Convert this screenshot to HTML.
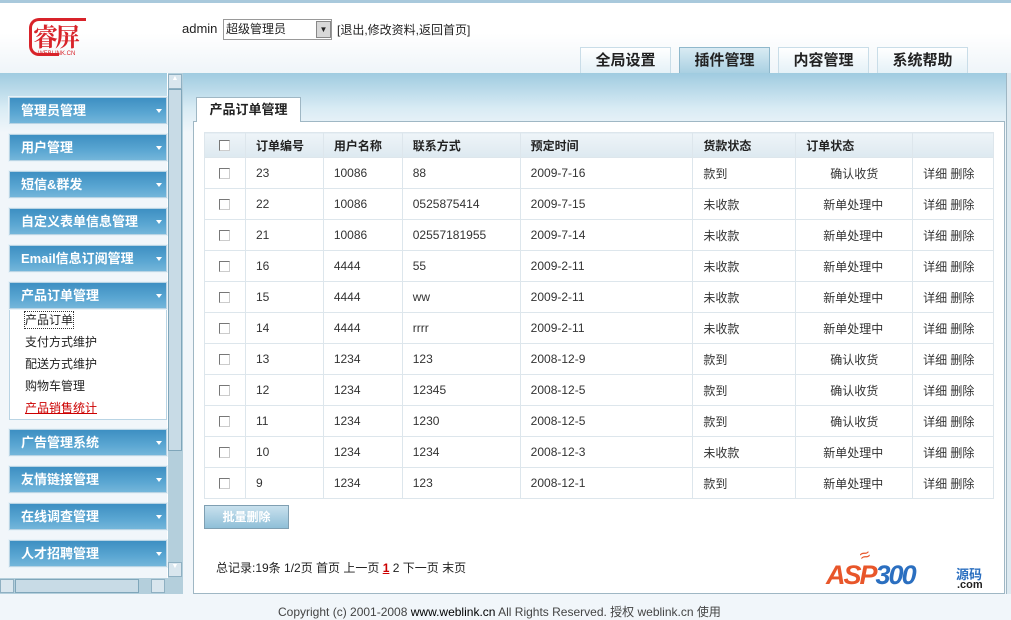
<!DOCTYPE html>
<html><head><meta charset="utf-8">
<style>
*{margin:0;padding:0;box-sizing:border-box}
body{width:1011px;height:612px;overflow:hidden;background:#f1f6fa;font-family:"Liberation Sans","Noto Sans CJK SC","WenQuanYi Zen Hei",sans-serif;font-size:12px;color:#222;position:relative}
.a{position:absolute}
.top{left:0;top:0;width:1011px;height:73px;background:linear-gradient(#fff 0,#fff 30px,#eef4f8 73px);border-top:3px solid #a9c9dc}
.band{left:0;top:73px;width:1011px;height:60px;background:linear-gradient(#9fcbe0,#d8ebf4 35px,#f1f6fa 60px)}
.tab{top:47px;height:26px;width:91px;background:linear-gradient(#fff,#e4f1f7);border:1px solid #c9dde8;border-bottom:none;font-size:15px;font-weight:bold;text-align:center;line-height:25px;color:#222}
.tab.on{background:linear-gradient(#d9ebf3,#a9d0e2);border-color:#8fb8cc}
.mi{left:9px;width:158px;height:27px;background:linear-gradient(#3d8fc2,#5aa6d2 60%,#74b6da);border:1px solid #b9d4e4;outline:1px solid #e8f2f8;color:#fff;font-weight:bold;font-size:13px;line-height:25px;padding-left:11px}
.mi:after{content:"";position:absolute;right:4px;top:11px;border:3px solid transparent;border-top:4px solid #fff}
.sub{left:18px;font-size:12px;line-height:22px}
table{border-collapse:collapse;position:absolute;left:204px;top:132px;width:790px}
td{border:1px solid #dde6ec;height:31px;padding-left:10px;font-size:12px;color:#333}
tr.h td{height:25px;background:linear-gradient(#eef4f8,#dde9f0);font-weight:bold;color:#222}
.cb{display:inline-block;width:11px;height:11px;border:1px solid #777;border-right-color:#ccc;border-bottom-color:#ccc;background:#fff;vertical-align:middle}
</style></head><body>
<div class="a top"></div>
<div class="a band"></div>
<!-- logo -->
<div class="a" style="left:29px;top:18px;width:30px;height:38px;border:3px solid #d8232a;border-right:none;border-radius:10px 0 0 10px"></div>
<div class="a" style="left:50px;top:18px;width:36px;height:3px;background:#d8232a"></div>
<div class="a" style="left:33px;top:18px;font-size:25px;font-weight:bold;color:#d8232a;letter-spacing:-3px;font-family:'Noto Serif CJK SC',serif">睿屏</div>
<div class="a" style="left:38px;top:51px;font-size:6px;color:#d8232a">WEBLINK.CN</div>
<div class="a" style="left:182px;top:21px;font-size:13px">admin</div>
<div class="a" style="left:223px;top:19px;width:109px;height:21px;border:1px solid #999;background:#fff;font-size:12px;line-height:18px;padding-left:2px">超级管理员</div>
<div class="a" style="left:316px;top:21px;width:15px;height:17px;background:#d8d8d8;border:1px solid #888;font-size:8px;text-align:center;line-height:16px">▼</div>
<div class="a" style="left:337px;top:21px;font-size:12px">[退出,修改资料,返回首页]</div>
<div class="a tab" style="left:580px">全局设置</div>
<div class="a tab on" style="left:679px">插件管理</div>
<div class="a tab" style="left:778px">内容管理</div>
<div class="a tab" style="left:877px">系统帮助</div>
<!-- sidebar -->
<div class="a" style="left:167px;top:73px;width:16px;height:505px;background:#b4cfdc;border-left:1px solid #fff"></div>
<div class="a" style="left:168px;top:74px;width:14px;height:15px;background:#d9e6ee;border:1px solid #8fb0c2;font-size:7px;text-align:center;color:#fff">▲</div>
<div class="a" style="left:168px;top:89px;width:14px;height:362px;background:#c8dbe6;border:1px solid #7fa6ba"></div>
<div class="a" style="left:168px;top:562px;width:14px;height:15px;background:#d9e6ee;border:1px solid #8fb0c2;font-size:7px;text-align:center;color:#fff">▼</div>
<div class="a" style="left:0;top:578px;width:183px;height:16px;background:#b4cfdc"></div>
<div class="a" style="left:0;top:579px;width:14px;height:14px;background:#d9e6ee;border:1px solid #8fb0c2"></div>
<div class="a" style="left:15px;top:579px;width:124px;height:14px;background:#c8dbe6;border:1px solid #7fa6ba"></div>
<div class="a" style="left:151px;top:579px;width:14px;height:14px;background:#d9e6ee;border:1px solid #8fb0c2"></div>
<div class="a mi" style="top:97px">管理员管理</div>
<div class="a mi" style="top:134px">用户管理</div>
<div class="a mi" style="top:171px">短信&amp;群发</div>
<div class="a mi" style="top:208px">自定义表单信息管理</div>
<div class="a mi" style="top:245px">Email信息订阅管理</div>
<div class="a" style="left:9px;top:282px;width:158px;height:138px;background:#fff;border:1px solid #b9d4e4"></div>
<div class="a mi" style="top:282px">产品订单管理</div>
<div class="a sub" style="top:309px;outline:1px dotted #333;outline-offset:-3px;padding:0 3px;left:22px">产品订单</div>
<div class="a sub" style="top:331px;left:25px">支付方式维护</div>
<div class="a sub" style="top:353px;left:25px">配送方式维护</div>
<div class="a sub" style="top:375px;left:25px">购物车管理</div>
<div class="a sub" style="top:397px;left:25px;color:#c00;text-decoration:underline">产品销售统计</div>
<div class="a mi" style="top:429px">广告管理系统</div>
<div class="a mi" style="top:466px">友情链接管理</div>
<div class="a mi" style="top:503px">在线调查管理</div>
<div class="a mi" style="top:540px">人才招聘管理</div>
<!-- main -->
<div class="a" style="left:193px;top:121px;width:812px;height:473px;background:#fff;border:1px solid #9fb7c4"></div>
<div class="a" style="left:196px;top:97px;width:105px;height:25px;background:#fff;border:1px solid #9fb7c4;border-bottom:none;font-weight:bold;font-size:13px;text-align:center;line-height:24px">产品订单管理</div>
<div class="a" style="left:1006px;top:73px;width:5px;height:521px;background:#dde9f0;border-left:1px solid #9fb7c4"></div>
<table>
<colgroup><col style="width:41px"><col style="width:78px"><col style="width:79px"><col style="width:118px"><col style="width:173px"><col style="width:103px"><col style="width:117px"><col style="width:81px"></colgroup>
<tr class="h"><td style="padding-left:14px"><span class="cb"></span></td><td>订单编号</td><td>用户名称</td><td>联系方式</td><td>预定时间</td><td>货款状态</td><td>订单状态</td><td></td></tr>
<tr><td style="padding-left:14px"><span class="cb"></span></td><td>23</td><td>10086</td><td>88</td><td>2009-7-16</td><td>款到</td><td style="padding-left:34px">确认收货</td><td>详细 删除</td></tr>
<tr><td style="padding-left:14px"><span class="cb"></span></td><td>22</td><td>10086</td><td>0525875414</td><td>2009-7-15</td><td>未收款</td><td style="padding-left:27px">新单处理中</td><td>详细 删除</td></tr>
<tr><td style="padding-left:14px"><span class="cb"></span></td><td>21</td><td>10086</td><td>02557181955</td><td>2009-7-14</td><td>未收款</td><td style="padding-left:27px">新单处理中</td><td>详细 删除</td></tr>
<tr><td style="padding-left:14px"><span class="cb"></span></td><td>16</td><td>4444</td><td>55</td><td>2009-2-11</td><td>未收款</td><td style="padding-left:27px">新单处理中</td><td>详细 删除</td></tr>
<tr><td style="padding-left:14px"><span class="cb"></span></td><td>15</td><td>4444</td><td>ww</td><td>2009-2-11</td><td>未收款</td><td style="padding-left:27px">新单处理中</td><td>详细 删除</td></tr>
<tr><td style="padding-left:14px"><span class="cb"></span></td><td>14</td><td>4444</td><td>rrrr</td><td>2009-2-11</td><td>未收款</td><td style="padding-left:27px">新单处理中</td><td>详细 删除</td></tr>
<tr><td style="padding-left:14px"><span class="cb"></span></td><td>13</td><td>1234</td><td>123</td><td>2008-12-9</td><td>款到</td><td style="padding-left:34px">确认收货</td><td>详细 删除</td></tr>
<tr><td style="padding-left:14px"><span class="cb"></span></td><td>12</td><td>1234</td><td>12345</td><td>2008-12-5</td><td>款到</td><td style="padding-left:34px">确认收货</td><td>详细 删除</td></tr>
<tr><td style="padding-left:14px"><span class="cb"></span></td><td>11</td><td>1234</td><td>1230</td><td>2008-12-5</td><td>款到</td><td style="padding-left:34px">确认收货</td><td>详细 删除</td></tr>
<tr><td style="padding-left:14px"><span class="cb"></span></td><td>10</td><td>1234</td><td>1234</td><td>2008-12-3</td><td>未收款</td><td style="padding-left:27px">新单处理中</td><td>详细 删除</td></tr>
<tr><td style="padding-left:14px"><span class="cb"></span></td><td>9</td><td>1234</td><td>123</td><td>2008-12-1</td><td>款到</td><td style="padding-left:27px">新单处理中</td><td>详细 删除</td></tr>
</table>
<div class="a" style="left:204px;top:505px;width:85px;height:24px;background:linear-gradient(#c9e1ee,#8fbfd8);border:1px solid #7f9fb2;color:#fff;font-weight:bold;text-align:center;line-height:22px">批量删除</div>
<div class="a" style="left:216px;top:559px;font-size:12px">总记录:19条 1/2页 首页 上一页 <b style="color:#c00;text-decoration:underline">1</b> 2 下一页 末页</div>
<div class="a" style="left:860px;top:545px;font-size:18px;color:#e8562a;font-style:italic;transform:rotate(-20deg)">≈</div>
<div class="a" style="left:826px;top:560px;font-size:27px;font-weight:bold;font-style:italic;letter-spacing:-2px;color:#e8562a">ASP<span style="color:#2b6fc0">300</span></div>
<div class="a" style="left:956px;top:564px;font-size:13px;font-weight:bold;color:#2b6fc0">源码</div>
<div class="a" style="left:957px;top:579px;font-size:11px;font-weight:bold;color:#222">.com</div>
<div class="a" style="left:278px;top:603px;font-size:12px;color:#444">Copyright (c) 2001-2008 <span style="color:#000">www.weblink.cn</span> All Rights Reserved. 授权 weblink.cn 使用</div>
</body></html>
